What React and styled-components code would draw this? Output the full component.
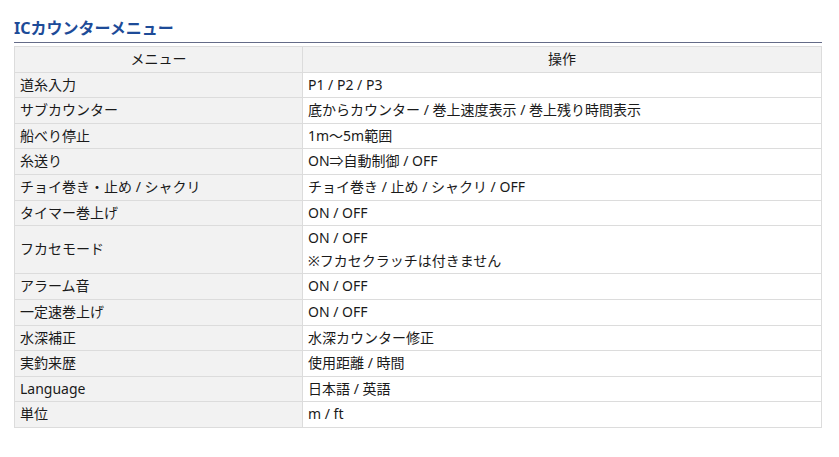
import React from 'react';
import styled, { createGlobalStyle } from 'styled-components';

const GlobalStyle = createGlobalStyle`
  body {
    margin: 0;
    background: #ffffff;
    font-family: 'Noto Sans', 'Noto Sans CJK JP', sans-serif;
    color: #1a1a1a;
  }
`;

const Section = styled.section`
  width: 808px;
  margin: 0 0 0 14px;
  padding-top: 16px;
`;

const Heading = styled.h2`
  margin: 0 0 3px;
  padding-bottom: 2px;
  font-size: 16px;
  line-height: 24px;
  font-weight: 700;
  color: #1d4b98;
  border-bottom: 1px solid #646b87;
`;

const SpecTable = styled.table`
  width: 100%;
  table-layout: fixed;
  border-collapse: collapse;
  font-size: 14px;
  line-height: 22.6px;
  border: 1px solid #dcdcdc;
`;

const HeadCell = styled.th`
  padding: 1px 5px;
  font-weight: 400;
  text-align: center;
  background: #f2f2f2;
  border: 1px solid #dcdcdc;
  width: ${(p) => p.$width || 'auto'};
`;

const MenuCell = styled.td`
  padding: 1px 5px;
  background: #f2f2f2;
  border: 1px solid #dcdcdc;
`;

const ValueCell = styled.td`
  padding: 1px 5px;
  background: #ffffff;
  border: 1px solid #dcdcdc;
`;

const rows = [
  ['道糸入力', ['P1 / P2 / P3']],
  ['サブカウンター', ['底からカウンター / 巻上速度表示 / 巻上残り時間表示']],
  ['船べり停止', ['1m〜5m範囲']],
  ['糸送り', ['ON⇒自動制御 / OFF']],
  ['チョイ巻き・止め / シャクリ', ['チョイ巻き / 止め / シャクリ / OFF']],
  ['タイマー巻上げ', ['ON / OFF']],
  ['フカセモード', ['ON / OFF', '※フカセクラッチは付きません']],
  ['アラーム音', ['ON / OFF']],
  ['一定速巻上げ', ['ON / OFF']],
  ['水深補正', ['水深カウンター修正']],
  ['実釣来歴', ['使用距離 / 時間']],
  ['Language', ['日本語 / 英語']],
  ['単位', ['m / ft']],
];

const App = () => {
  return (
    <>
      <GlobalStyle />
      <Section>
        <Heading>ICカウンターメニュー</Heading>
        <SpecTable>
          <thead>
            <tr>
              <HeadCell $width="277px">メニュー</HeadCell>
              <HeadCell>操作</HeadCell>
            </tr>
          </thead>
          <tbody>
            {rows.map(([menu, values]) => (
              <tr key={menu}>
                <MenuCell>{menu}</MenuCell>
                <ValueCell>
                  {values.map((v, i) => (
                    <React.Fragment key={i}>
                      {i > 0 && <br />}
                      {v}
                    </React.Fragment>
                  ))}
                </ValueCell>
              </tr>
            ))}
          </tbody>
        </SpecTable>
      </Section>
    </>
  );
};

export default App;
